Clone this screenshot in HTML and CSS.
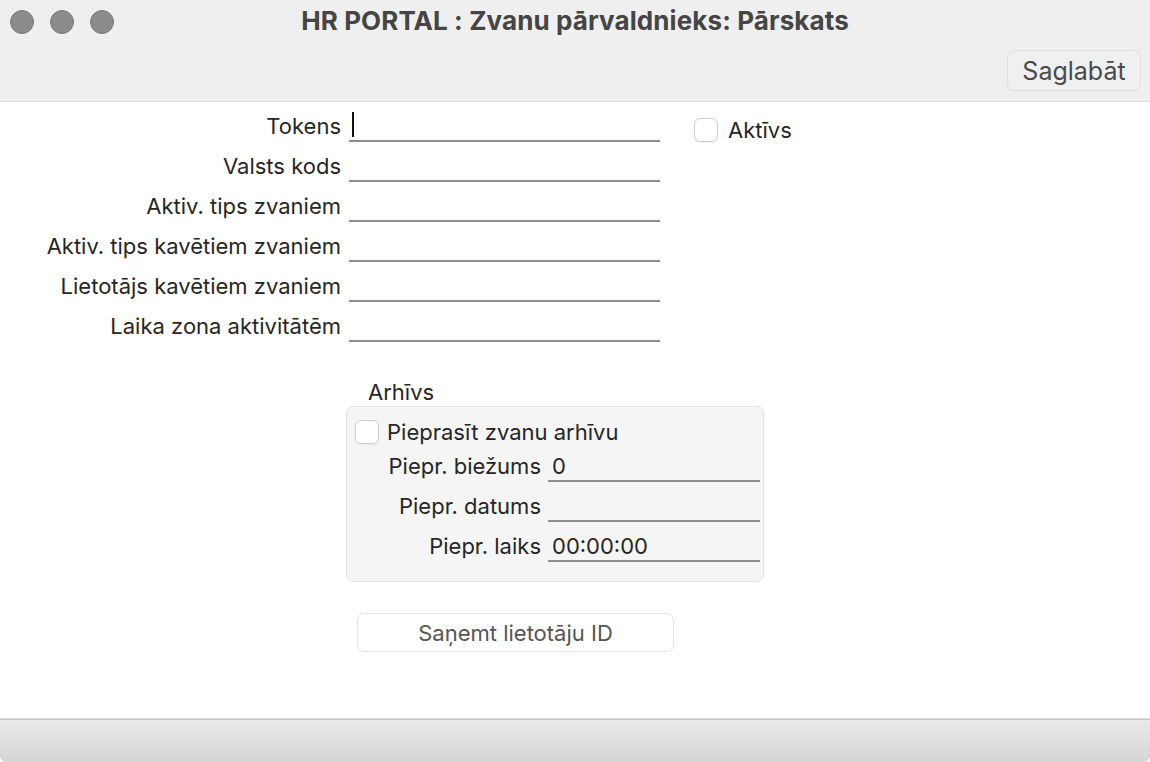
FILE: index.html
```html
<!DOCTYPE html>
<html lang="lv">
<head>
<meta charset="utf-8">
<title>HR PORTAL</title>
<link rel="stylesheet" href="styles.css">
</head>
<body>
<div class="window">
  <header class="titlebar">
    <div class="titlerow">
      <div class="lights">
        <span class="light"></span><span class="light"></span><span class="light"></span>
      </div>
      <div class="title">HR PORTAL : Zvanu pārvaldnieks: Pārskats</div>
    </div>
    <div class="toolbar">
      <button class="tbtn">Saglabāt</button>
    </div>
  </header>
  <main class="content">
    <div class="form">
      <div class="fields">
        <label class="lbl">Tokens</label><div class="inp"><span class="caret"></span></div>
        <label class="lbl">Valsts kods</label><div class="inp"></div>
        <label class="lbl">Aktiv. tips zvaniem</label><div class="inp"></div>
        <label class="lbl">Aktiv. tips kavētiem zvaniem</label><div class="inp"></div>
        <label class="lbl">Lietotājs kavētiem zvaniem</label><div class="inp"></div>
        <label class="lbl">Laika zona aktivitātēm</label><div class="inp"></div>
      </div>
      <div class="side">
        <div class="chk"><span class="box"></span><span>Aktīvs</span></div>
      </div>
    </div>
    <div class="archive">
      <div class="grp-title">Arhīvs</div>
      <div class="group">
        <div class="chk grp-chk"><span class="box"></span><span>Pieprasīt zvanu arhīvu</span></div>
        <div class="gfields">
          <label class="lbl">Piepr. biežums</label><div class="inp">0</div>
          <label class="lbl">Piepr. datums</label><div class="inp"></div>
          <label class="lbl">Piepr. laiks</label><div class="inp">00:00:00</div>
        </div>
      </div>
      <button class="btn">Saņemt lietotāju ID</button>
    </div>
  </main>
  <footer class="footer"></footer>
</div>
</body>
</html>
```

FILE: styles.css
```css
* { box-sizing: border-box; }
html, body { margin: 0; padding: 0; }
body {
  width: 1150px;
  height: 762px;
  overflow: hidden;
  font-family: Inter, "Noto Sans", "Liberation Sans", sans-serif;
  color: #262626;
  background: #ffffff;
}
.window {
  width: 1150px;
  height: 762px;
  display: flex;
  flex-direction: column;
}
.titlebar {
  height: 102px;
  background: #efefef;
  border-bottom: 1px solid #dcdcdc;
  display: flex;
  flex-direction: column;
}
.titlerow {
  height: 44px;
  position: relative;
  display: flex;
  align-items: center;
  justify-content: center;
}
.lights {
  position: absolute;
  left: 10px;
  top: 10px;
  display: flex;
  gap: 16px;
}
.light {
  width: 24px;
  height: 24px;
  border-radius: 50%;
  background: #8b8b8b;
  border: 1px solid #7a7a7a;
}
.title {
  font-weight: 700;
  font-size: 26px;
  line-height: 30px;
  color: #454545;
  margin-top: -3px;
  letter-spacing: 0.1px;
}
.toolbar {
  flex: 1;
  display: flex;
  justify-content: flex-end;
  align-items: flex-start;
  padding: 6px 9px 0 0;
}
.tbtn {
  width: 134px;
  height: 41px;
  border: 1px solid #dedede;
  border-radius: 7px;
  background: #f0f0f0;
  font-family: inherit;
  font-size: 25px;
  line-height: 30px;
  color: #4a4a4a;
  padding: 0;
}
.content {
  flex: 1;
  display: flex;
  flex-direction: column;
}
.form {
  display: flex;
}
.fields {
  display: grid;
  grid-template-columns: 341px 311px;
  grid-auto-rows: 40px;
  column-gap: 8px;
}
.lbl {
  font-size: 22px;
  text-align: right;
  align-self: end;
  line-height: 26px;
  padding-bottom: 3px;
  white-space: nowrap;
  color: #262626;
}
.inp {
  border-bottom: 2px solid #8d8d8d;
  font-size: 22px;
  line-height: 26px;
  display: flex;
  align-items: flex-end;
  padding: 0 0 1px 4px;
  color: #262626;
}
.caret {
  width: 2px;
  height: 25px;
  background: #111;
  margin-left: -1px;
  margin-bottom: 2px;
}
.side {
  padding: 15px 0 0 34px;
}
.chk {
  display: flex;
  align-items: center;
  gap: 10px;
  font-size: 22px;
  line-height: 26px;
  color: #262626;
}
.box {
  width: 24px;
  height: 24px;
  border: 1px solid #cfcfcf;
  border-radius: 6px;
  background: #fff;
  box-shadow: 0 1px 1px rgba(0,0,0,0.06);
}
.archive {
  display: flex;
  flex-direction: column;
  padding-left: 346px;
  margin-top: 38px;
}
.grp-title {
  font-size: 22px;
  line-height: 24px;
  padding-left: 22px;
  margin-bottom: 2px;
}
.group {
  width: 418px;
  height: 176px;
  background: #f5f5f5;
  border: 1px solid #e3e3e3;
  border-radius: 7px;
  padding: 12px 3px 0 8px;
}
.grp-chk {
  gap: 8px;
}
.gfields {
  display: grid;
  grid-template-columns: 186px 212px;
  grid-auto-rows: 40px;
  column-gap: 7px;
  margin-top: -3px;
}
.gfields .lbl { padding-bottom: 3px; }
.gfields .inp { padding-left: 4px; padding-bottom: 1px; }
.btn {
  margin: 31px 0 0 11px;
  width: 317px;
  height: 39px;
  background: #ffffff;
  border: 1px solid #e6e6e6;
  border-radius: 7px;
  font-family: inherit;
  font-size: 22px;
  color: #555;
  padding: 0;
}
.footer {
  height: 44px;
  border-top: 1px solid #dedede;
  box-shadow: inset 0 1px 0 #c4c4c4;
  background: linear-gradient(#eaeaea, #d5d5d5);
  border-radius: 0 0 6px 6px;
}
```
